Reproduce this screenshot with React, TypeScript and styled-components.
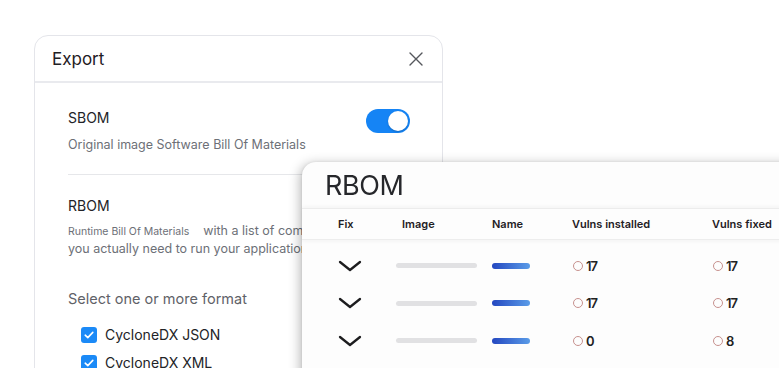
import React from "react";
import styled, { createGlobalStyle } from "styled-components";

const Global = createGlobalStyle`
  html, body { margin: 0; padding: 0; background: #ffffff; }
  body { width: 779px; height: 368px; overflow: hidden; font-family: Inter, "Noto Sans", Arial, sans-serif; }
  * { box-sizing: border-box; }
`;

const Canvas = styled.div`
  position: relative;
  width: 779px;
  height: 368px;
  overflow: hidden;
  padding: 35px 0 0 34px;
`;

const Dialog = styled.div`
  width: 409px;
  height: 360px;
  border: 1px solid #e4e5ea;
  border-radius: 14px;
  background: #fff;
`;

const DialogHeader = styled.div`
  height: 47px;
  display: flex;
  align-items: center;
  justify-content: space-between;
  padding: 0 18px 0 17px;
  border-bottom: 2px solid #e9eaee;
`;

const DialogTitle = styled.div`
  font-size: 17px;
  color: #1f2024;
  font-weight: 400;
`;

const CloseBtn = styled.div`
  width: 16px;
  height: 16px;
  display: flex;
  align-items: center;
  justify-content: center;
`;

const DialogBody = styled.div`
  padding: 0 32px 0 33px;
`;

const Section = styled.div<{ $divider?: boolean }>`
  padding: ${(p) => (p.$divider ? "26px 0 21px" : "22px 0 0")};
  border-bottom: ${(p) => (p.$divider ? "1px solid #e6e7ea" : "none")};
  display: flex;
  justify-content: space-between;
  align-items: flex-start;
`;

const SectionText = styled.div`
  display: flex;
  flex-direction: column;
`;

const SectionTitle = styled.div`
  font-size: 14px;
  line-height: 18px;
  color: #222327;
  font-weight: 400;
`;

const SectionDesc = styled.div<{ $gap?: number }>`
  margin-top: ${(p) => p.$gap ?? 9}px;
  font-size: 12.5px;
  line-height: 17px;
  color: #6d7077;
  white-space: nowrap;
`;

const SmallText = styled.span`
  font-size: 10.5px;
  margin-right: 14px;
`;

const Toggle = styled.div`
  width: 44px;
  height: 24px;
  border-radius: 12px;
  background: #1584f5;
  padding: 2px;
  display: flex;
  justify-content: flex-end;
`;

const Knob = styled.div`
  width: 20px;
  height: 20px;
  border-radius: 50%;
  background: #fff;
  box-shadow: 0 1px 2px rgba(0, 0, 0, 0.2);
`;

const FormatLabel = styled.div`
  margin-top: 33px;
  font-size: 14.5px;
  color: #5f6268;
`;

const CheckList = styled.div`
  margin-top: 20px;
  padding-left: 13px;
  display: flex;
  flex-direction: column;
  gap: 12px;
`;

const CheckRow = styled.div`
  display: flex;
  align-items: center;
  gap: 8px;
  font-size: 14px;
  color: #222327;
  line-height: 16px;
`;

const CheckBox = styled.div`
  width: 16px;
  height: 16px;
  border-radius: 3px;
  background: #1b8af7;
  display: flex;
  align-items: center;
  justify-content: center;
`;

const Card = styled.div`
  position: absolute;
  left: 302px;
  top: 162px;
  width: 520px;
  height: 260px;
  background: #fdfdfd;
  border-radius: 14px;
  box-shadow: -2px 2px 12px rgba(0, 0, 0, 0.28), 0 0 3px rgba(0, 0, 0, 0.08);
`;

const CardTitle = styled.div`
  padding: 9px 0 0 23px;
  height: 46px;
  font-size: 27px;
  line-height: 30px;
  color: #26272b;
  letter-spacing: -0.4px;
  filter: blur(0.3px);
`;

const GridRow = styled.div<{ $head?: boolean }>`
  display: grid;
  grid-template-columns: 58px 95px 81px 140px 1fr;
  align-items: center;
  padding-left: 36px;
  height: ${(p) => (p.$head ? "32px" : "37.5px")};
  ${(p) =>
    p.$head
      ? `border-top: 1px solid #ececec; border-bottom: 1px solid #ededed;
         box-shadow: 0 -2px 3px rgba(0,0,0,0.03), 0 2px 3px rgba(0,0,0,0.03);
         margin-bottom: 7px;`
      : ""}
`;

const HeadCell = styled.div<{ $pad?: number }>`
  font-size: 11px;
  font-weight: 600;
  color: #1f2024;
  padding-left: ${(p) => p.$pad ?? 0}px;
`;

const GrayBar = styled.div`
  width: 81px;
  height: 5px;
  border-radius: 3px;
  background: #e1e1e3;
`;

const BlueBar = styled.div`
  width: 38px;
  height: 6px;
  border-radius: 3px;
  margin-left: 1px;
  background: linear-gradient(90deg, #2447c0, #5a9ce8);
`;

const Vuln = styled.div`
  display: flex;
  align-items: center;
  gap: 3px;
  font-size: 13px;
  font-weight: 600;
  letter-spacing: -0.9px;
  color: #222;
`;

const Ring = styled.span`
  width: 10px;
  height: 10px;
  border-radius: 50%;
  border: 1.5px solid #c7918e;
  margin-left: 1px;
`;

const Chevron = () => (
  <svg width="24" height="12" viewBox="0 0 24 12" fill="none">
    <path d="M2 2 L12 10 L22 2" stroke="#1c1c1e" strokeWidth="2.3" strokeLinecap="round" strokeLinejoin="round" />
  </svg>
);

const Check = () => (
  <svg width="10" height="8" viewBox="0 0 10 8" fill="none">
    <path d="M1.2 4.2 L3.8 6.6 L8.8 1.4" stroke="#fff" strokeWidth="1.6" strokeLinecap="round" strokeLinejoin="round" />
  </svg>
);

const rows = [
  { installed: "17", fixed: "17" },
  { installed: "17", fixed: "17" },
  { installed: "0", fixed: "8" },
];

export default function App() {
  return (
    <>
      <Global />
      <Canvas>
        <Dialog>
          <DialogHeader>
            <DialogTitle>Export</DialogTitle>
            <CloseBtn>
              <svg width="14" height="14" viewBox="0 0 14 14" fill="none">
                <path d="M1 1 L13 13 M13 1 L1 13" stroke="#55575c" strokeWidth="1.4" strokeLinecap="round" />
              </svg>
            </CloseBtn>
          </DialogHeader>
          <DialogBody>
            <Section $divider>
              <SectionText>
                <SectionTitle>SBOM</SectionTitle>
                <SectionDesc>Original image Software Bill Of Materials</SectionDesc>
              </SectionText>
              <Toggle>
                <Knob />
              </Toggle>
            </Section>
            <Section>
              <SectionText>
                <SectionTitle>RBOM</SectionTitle>
                <SectionDesc $gap={7}>
                  <SmallText>Runtime Bill Of Materials</SmallText>with a list of components
                  <br />
                  you actually need to run your application
                </SectionDesc>
              </SectionText>
            </Section>
            <FormatLabel>Select one or more format</FormatLabel>
            <CheckList>
              <CheckRow>
                <CheckBox>
                  <Check />
                </CheckBox>
                CycloneDX JSON
              </CheckRow>
              <CheckRow>
                <CheckBox>
                  <Check />
                </CheckBox>
                CycloneDX XML
              </CheckRow>
            </CheckList>
          </DialogBody>
        </Dialog>
        <Card>
          <CardTitle>RBOM</CardTitle>
          <GridRow $head>
            <HeadCell>Fix</HeadCell>
            <HeadCell $pad={6}>Image</HeadCell>
            <HeadCell $pad={1}>Name</HeadCell>
            <HeadCell>Vulns installed</HeadCell>
            <HeadCell>Vulns fixed</HeadCell>
          </GridRow>
          {rows.map((r, i) => (
            <GridRow key={i}>
              <Chevron />
              <GrayBar />
              <BlueBar />
              <Vuln>
                <Ring />
                {r.installed}
              </Vuln>
              <Vuln>
                <Ring />
                {r.fixed}
              </Vuln>
            </GridRow>
          ))}
        </Card>
      </Canvas>
    </>
  );
}
